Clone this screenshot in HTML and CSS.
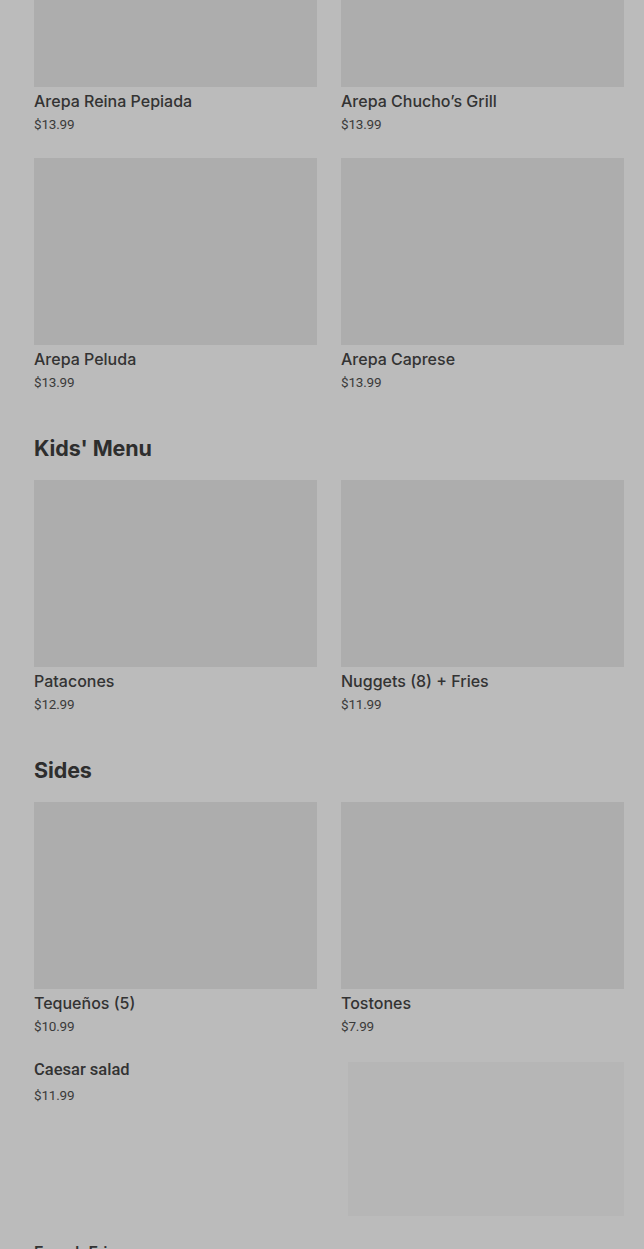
FILE: index.html
```html
<!DOCTYPE html>
<html>
<head>
<meta charset="utf-8">
<link rel="stylesheet" href="styles.css">
</head>
<body>
<div class="page">
  <section class="grid">
    <div class="item"><div class="img"></div><div class="name">Arepa Reina Pepiada</div><div class="price">$13.99</div></div>
    <div class="item"><div class="img"></div><div class="name">Arepa Chucho’s Grill</div><div class="price">$13.99</div></div>
    <div class="item"><div class="img"></div><div class="name">Arepa Peluda</div><div class="price">$13.99</div></div>
    <div class="item"><div class="img"></div><div class="name">Arepa Caprese</div><div class="price">$13.99</div></div>
  </section>
  <h2 class="heading">Kids' Menu</h2>
  <section class="grid">
    <div class="item"><div class="img"></div><div class="name">Patacones</div><div class="price">$12.99</div></div>
    <div class="item"><div class="img"></div><div class="name">Nuggets (8) + Fries</div><div class="price">$11.99</div></div>
  </section>
  <h2 class="heading">Sides</h2>
  <section class="grid">
    <div class="item"><div class="img"></div><div class="name">Tequeños (5)</div><div class="price">$10.99</div></div>
    <div class="item"><div class="img"></div><div class="name">Tostones</div><div class="price">$7.99</div></div>
    <div class="row-item">
      <div class="row-text"><div class="name alt">Caesar salad</div><div class="price alt">$11.99</div></div>
      <div class="row-img"></div>
    </div>
    <div class="row-item">
      <div class="row-text"><div class="name alt">French Fries</div><div class="price alt">$5.99</div></div>
      <div class="row-img later"></div>
    </div>
  </section>
</div>
</body>
</html>
```

FILE: styles.css
```css
html, body {
  margin: 0;
  padding: 0;
  background: #bbbbbb;
  overflow: hidden;
}
body {
  font-family: "Inter", "Roboto", sans-serif;
  color: #333333;
}
.page {
  margin-top: -100px;
  padding: 0 20px 0 34px;
}
.grid {
  display: grid;
  grid-template-columns: 283px 283px;
  column-gap: 24px;
  row-gap: 25px;
}
.item {
  display: flex;
  flex-direction: column;
}
.img {
  height: 187px;
  background: #adadad;
}
.name {
  margin-top: 4px;
  font-size: 16px;
  line-height: 20px;
  font-weight: 500;
  color: #333333;
}
.price {
  margin-top: 4px;
  font-family: "Roboto", sans-serif;
  font-size: 13.5px;
  line-height: 18px;
  color: #3a3a3a;
  letter-spacing: -0.2px;
}
.heading {
  margin: 41px 0 16px;
  font-size: 21.5px;
  line-height: 32px;
  font-weight: 700;
  color: #2e2e2e;
  letter-spacing: -0.1px;
}
.row-item {
  grid-column: 1 / -1;
  display: flex;
  justify-content: space-between;
  align-items: flex-start;
}
.row-item + .row-item {
  margin-top: 2px;
}
.row-text {
  display: flex;
  flex-direction: column;
}
.name.alt {
  font-family: "Roboto", sans-serif;
  margin-top: 0;
  font-size: 16.5px;
}
.price.alt {
  margin-top: 6px;
}
.row-img {
  width: 276px;
  height: 154px;
  margin-top: 2px;
  background: #b6b6b6;
}
.row-img.later {
  margin-top: 12px;
}
```
